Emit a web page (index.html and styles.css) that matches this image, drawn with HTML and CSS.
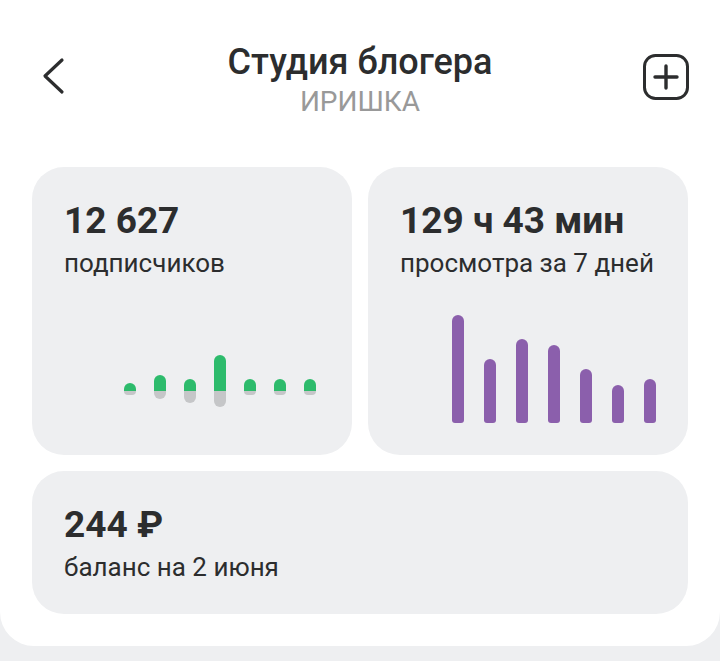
FILE: index.html
```html
<!DOCTYPE html>
<html lang="ru">
<head>
  <meta charset="UTF-8" />
  <meta name="viewport" content="width=device-width, initial-scale=1.0"/>
  <title>Студия блогера</title>
  <link rel="stylesheet" href="styles.css">
</head>
<body>
  <div class="sheet">
    <!-- Header -->
    <header class="header">
      <button class="icon-btn back" aria-label="Назад">
        <svg width="40" height="48" viewBox="0 0 40 48">
          <path d="M24 12 L7 28 L24 44" fill="none" stroke="#2c2d2e" stroke-width="3.2" stroke-linecap="round" stroke-linejoin="round"/>
        </svg>
      </button>
      <div class="title-block">
        <h1 class="title">Студия блогера</h1>
        <div class="subtitle">ИРИШКА</div>
      </div>
      <button class="icon-btn add" aria-label="Добавить">
        <svg width="48" height="48" viewBox="0 0 48 48">
          <rect x="2.5" y="2.5" width="43" height="43" rx="11" fill="none" stroke="#2c2d2e" stroke-width="3"/>
          <path d="M13 24 H35 M24 13 V35" stroke="#2c2d2e" stroke-width="3.4" stroke-linecap="round"/>
        </svg>
      </button>
    </header>

    <div class="cards">
      <!-- Subscribers -->
      <div class="card">
        <div class="value">12&nbsp;627</div>
        <div class="label">подписчиков</div>
        <div class="delta-chart">
          <div class="delta-row up">
            <span style="height: 8px"></span>
            <span style="height: 16px"></span>
            <span style="height: 12px"></span>
            <span style="height: 36px"></span>
            <span style="height: 12px"></span>
            <span style="height: 12px"></span>
            <span style="height: 12px"></span>
          </div>
          <div class="delta-row down">
            <span style="height: 4px"></span>
            <span style="height: 8px"></span>
            <span style="height: 12px"></span>
            <span style="height: 16px"></span>
            <span style="height: 4px"></span>
            <span style="height: 4px"></span>
            <span style="height: 4px"></span>
          </div>
        </div>
      </div>

      <!-- Views -->
      <div class="card">
        <div class="value">129 ч 43 мин</div>
        <div class="label">просмотра за 7 дней</div>
        <div class="bar-chart">
          <span style="height: 108px"></span>
          <span style="height: 64px"></span>
          <span style="height: 84px"></span>
          <span style="height: 78px"></span>
          <span style="height: 54px"></span>
          <span style="height: 38px"></span>
          <span style="height: 44px"></span>
        </div>
      </div>

      <!-- Balance -->
      <div class="card wide">
        <div class="value">244 ₽</div>
        <div class="label">баланс на 2 июня</div>
      </div>
    </div>
  </div>
</body>
</html>
```

FILE: styles.css
```css
body {
  margin: 0;
  background: #eeeff1;
  font-family: 'Roboto', 'Noto Sans', sans-serif;
  color: #2c2d2e;
}

.sheet {
  background: #ffffff;
  border-radius: 0 0 34px 34px;
  padding: 0 32px 32px;
}

.header {
  height: 167px;
  box-sizing: border-box;
  padding-top: 37px;
  display: grid;
  grid-template-columns: 48px 1fr 48px;
  align-items: start;
}

.icon-btn {
  background: none;
  border: none;
  padding: 0;
  cursor: pointer;
  display: flex;
}

.back {
  margin-top: 11px;
  margin-left: 6px;
}

.add {
  margin-top: 16px;
  margin-right: -2px;
  justify-self: end;
}

.title-block {
  text-align: center;
}

.title {
  margin: 0;
  font-size: 36px;
  font-weight: 500;
  line-height: 50px;
}

.subtitle {
  font-size: 28px;
  color: #999999;
  line-height: 30px;
}

.cards {
  display: grid;
  grid-template-columns: 1fr 1fr;
  gap: 16px;
}

.card {
  background: #eeeff1;
  border-radius: 32px;
  padding: 32px;
  height: 288px;
  box-sizing: border-box;
  display: flex;
  flex-direction: column;
}

.card.wide {
  grid-column: span 2;
  height: 143px;
}

.value {
  font-size: 37px;
  font-weight: 700;
  line-height: 44px;
}

.label {
  font-size: 26px;
  line-height: 32px;
  margin-top: 4px;
}

.delta-chart {
  margin-top: auto;
  margin-bottom: 16px;
  margin-right: 4px;
  align-self: flex-end;
}

.delta-row {
  display: flex;
  gap: 18px;
}

.delta-row span {
  width: 12px;
}

.delta-row.up {
  height: 36px;
  align-items: flex-end;
}

.delta-row.up span {
  background: #2dbb6c;
  border-radius: 6px 6px 0 0;
}

.delta-row.down {
  height: 16px;
  align-items: flex-start;
}

.delta-row.down span {
  background: #c5c6c8;
  border-radius: 0 0 6px 6px;
}

.bar-chart {
  margin-top: auto;
  align-self: flex-end;
  display: flex;
  align-items: flex-end;
  gap: 20px;
}

.bar-chart span {
  width: 12px;
  background: #8b5fac;
  border-radius: 6px 6px 3px 3px;
}
```
